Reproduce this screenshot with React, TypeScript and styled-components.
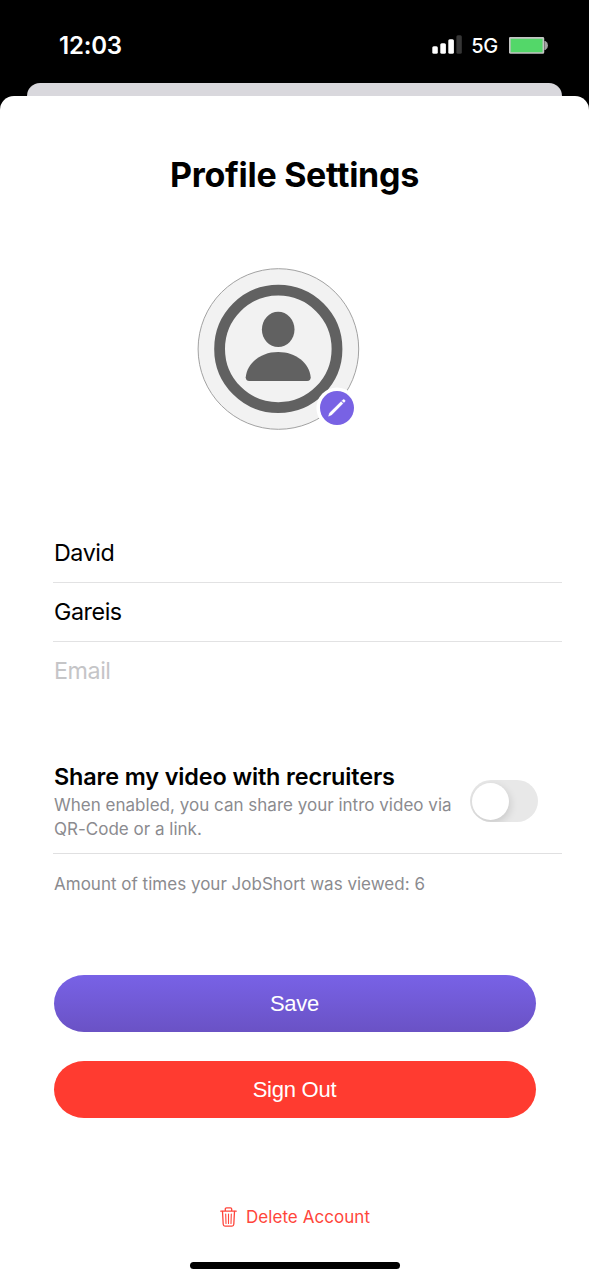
import React from "react";
import styled, { createGlobalStyle } from "styled-components";

const GlobalStyle = createGlobalStyle`
  * { box-sizing: border-box; }
  body { margin: 0; background: #000; font-family: Inter, "Liberation Sans", sans-serif; }
  button { font: inherit; border: 0; padding: 0; background: none; }
`;

const Screen = styled.main`
  width: 589px;
  height: 1280px;
  display: flex;
  flex-direction: column;
  overflow: hidden;
  background: #000;
`;

const StatusBar = styled.header`
  height: 83px;
  flex: none;
  display: flex;
  align-items: flex-start;
  justify-content: space-between;
  padding: 30px 41px 0 59px;
  color: #fff;
`;

const Clock = styled.time`
  margin-top: 1px;
  font-size: 24px;
  line-height: 30px;
  font-weight: 600;
  letter-spacing: -0.2px;
`;

const Indicators = styled.div`
  height: 30px;
  display: flex;
  align-items: center;
`;

const Network = styled.span`
  margin: 2px 11px 0 9px;
  font-size: 20px;
  line-height: 30px;
  font-weight: 500;
  letter-spacing: -0.3px;
`;

const SheetBehind = styled.div`
  flex: none;
  height: 13px;
  margin: 0 27px;
  border-radius: 13px 13px 0 0;
  background: #d9d8dd;
`;

const Sheet = styled.section`
  flex: 1;
  display: flex;
  flex-direction: column;
  border-radius: 14px 14px 0 0;
  background: #fff;
`;

const Title = styled.h1`
  margin: 57px 0 0;
  text-align: center;
  font-size: 34px;
  line-height: 44px;
  font-weight: 700;
  letter-spacing: -0.3px;
`;

const Avatar = styled.div`
  position: relative;
  width: 162px;
  height: 162px;
  margin: 71px 0 0 197px;
  svg { display: block; }
`;

const EditBadge = styled.button`
  position: absolute;
  left: 123.2px;
  top: 122.8px;
  width: 34px;
  height: 34px;
  border-radius: 50%;
  background: #7862e4;
  box-shadow: 0 0 0 3.6px #fff;
`;

const Fields = styled.div`
  margin: 94px 27px 0 53px;
`;

const Field = styled.div<{ $placeholder?: boolean; $last?: boolean }>`
  height: 59px;
  padding-left: 1px;
  font-size: 23.3px;
  line-height: 58px;
  letter-spacing: -0.45px;
  color: ${(p) => (p.$placeholder ? "#c5c5c7" : "#000")};
  border-bottom: ${(p) => (p.$last ? "0" : "1px solid #e2e2e3")};
`;

const ShareRow = styled.div`
  height: 94px;
  margin: 59px 27px 0 53px;
  padding: 0 24px 0 1px;
  display: flex;
  align-items: flex-start;
  justify-content: space-between;
  border-bottom: 1px solid #e0e0e1;
`;

const ShareTitle = styled.h2`
  margin: 2px 0 0;
  font-size: 23.4px;
  line-height: 30px;
  font-weight: 600;
  letter-spacing: -0.12px;
  white-space: nowrap;
`;

const Caption = styled.p<{ $inset?: boolean }>`
  margin: ${(p) => (p.$inset ? "18px 27px 0 54px" : "1px 0 0")};
  font-size: 17px;
  line-height: 24px;
  letter-spacing: 0.01px;
  color: #8b8b8f;
  white-space: nowrap;
`;

const Toggle = styled.button`
  flex: none;
  width: 68px;
  height: 42px;
  margin-top: 20px;
  padding: 2.5px 2px;
  border-radius: 21px;
  background: #e8e8e8;
  overflow: hidden;
`;

const Knob = styled.span`
  display: block;
  width: 37px;
  height: 37px;
  border-radius: 50%;
  background: #fff;
  box-shadow: 1px 3px 8px rgba(0, 0, 0, 0.14);
`;

const Actions = styled.div`
  display: flex;
  flex-direction: column;
  gap: 29.5px;
  margin: 78.8px 53.5px 0;
`;

const Action = styled.button<{ $danger?: boolean }>`
  height: 57px;
  border-radius: 30px / 28.5px;
  background: ${(p) => (p.$danger ? "#ff3b30" : "linear-gradient(#7862e6, #6a52c5)")};
  color: #fff;
  font-family: "Liberation Sans", Arial, sans-serif;
  font-size: 22px;
  letter-spacing: -0.25px;
  line-height: 57px;
`;

const DeleteLink = styled.button`
  align-self: center;
  display: flex;
  align-items: center;
  gap: 9px;
  height: 26px;
  margin: 86px 0 0 1px;
  color: #ff453b;
  font-size: 17px;
  letter-spacing: 0.05px;
`;

const HomeIndicator = styled.div`
  width: 210px;
  height: 7px;
  margin: 32px auto 0;
  border-radius: 4px;
  background: #000;
`;

const SignalIcon = () => (
  <svg width="30" height="20" viewBox="0 0 30 20" fill="#fff">
    <rect x="0.3" y="11.2" width="5.5" height="7.6" rx="1.5" />
    <rect x="8.3" y="8.2" width="5.6" height="10.6" rx="1.5" />
    <rect x="16.3" y="4.2" width="5.6" height="14.6" rx="1.5" />
    <rect x="24.4" y="0.2" width="5.4" height="18.6" rx="1.5" fill="#363636" />
  </svg>
);

const BatteryIcon = () => (
  <svg width="39" height="17" viewBox="0 0 39 17">
    <rect x="0.8" y="0.8" width="33.6" height="15.2" rx="0.7" fill="#53d769" stroke="#c4c4c4" strokeWidth="1.7" />
    <path d="M35.4 4H36.4Q39 5.2 39 8.4T36.4 12.9H35.4Z" fill="#a3a3a3" />
  </svg>
);

const PersonIcon = () => (
  <svg width="162" height="162" viewBox="0 0 162 162" overflow="visible">
    <circle cx="81.4" cy="81" r="80.3" fill="#f2f2f2" stroke="#a2a2a2" strokeWidth="1" />
    <circle cx="81.3" cy="80.9" r="58.7" fill="none" stroke="#616161" strokeWidth="10.8" />
    <ellipse cx="81.2" cy="61.4" rx="16.3" ry="17.7" fill="#616161" />
    <path d="M52.2 112.9Q48.7 112.9 48.7 109.2C50.2 95 63.5 84 81.2 84S112.2 95 113.7 109.2Q113.7 112.9 110.2 112.9Z" fill="#616161" />
  </svg>
);

const PencilIcon = () => (
  <svg width="34" height="34" viewBox="0 0 34 34" fill="#fff">
    <path d="M8.5 25.3L9.5 22L21.1 10.6 23 12.4 11.6 23.9Z" stroke="#fff" strokeWidth="0.3" />
    <path d="M22 9.7L22.9 8.8Q23.8 8.1 24.7 8.9T24.8 10.8L23.8 11.6Z" stroke="#fff" strokeWidth="0.4" />
  </svg>
);

const TrashIcon = () => (
  <svg width="17" height="20" viewBox="0 0 17 20" fill="none" stroke="currentColor" strokeWidth="1.3" strokeLinecap="round" strokeLinejoin="round">
    <path d="M0.8 4.2H16.2M5.3 4V2.1Q5.3 0.8 6.6 0.8H10.4Q11.7 0.8 11.7 2.1V4" />
    <path d="M2.5 4.4L3.2 17.3Q3.3 19.1 5 19.1H12Q13.7 19.1 13.8 17.3L14.5 4.4" />
    <path d="M5.7 7L6 16.4M8.5 7V16.4M11.3 7L11 16.4" strokeWidth="1.1" />
  </svg>
);

export default function App() {
  return (
    <>
      <GlobalStyle />
      <Screen>
        <StatusBar>
          <Clock>12:03</Clock>
          <Indicators>
            <SignalIcon />
            <Network>5G</Network>
            <BatteryIcon />
          </Indicators>
        </StatusBar>
        <SheetBehind />
        <Sheet>
          <Title>Profile Settings</Title>
          <Avatar>
            <PersonIcon />
            <EditBadge aria-label="Edit photo">
              <PencilIcon />
            </EditBadge>
          </Avatar>
          <Fields>
            <Field>David</Field>
            <Field>Gareis</Field>
            <Field $placeholder $last>Email</Field>
          </Fields>
          <ShareRow>
            <div>
              <ShareTitle>Share my video with recruiters</ShareTitle>
              <Caption>
                When enabled, you can share your intro video via
                <br />
                QR-Code or a link.
              </Caption>
            </div>
            <Toggle role="switch" aria-checked={false} aria-label="Share my video">
              <Knob />
            </Toggle>
          </ShareRow>
          <Caption $inset>Amount of times your JobShort was viewed: 6</Caption>
          <Actions>
            <Action>Save</Action>
            <Action $danger>Sign Out</Action>
          </Actions>
          <DeleteLink>
            <TrashIcon />
            Delete Account
          </DeleteLink>
          <HomeIndicator />
        </Sheet>
      </Screen>
    </>
  );
}
